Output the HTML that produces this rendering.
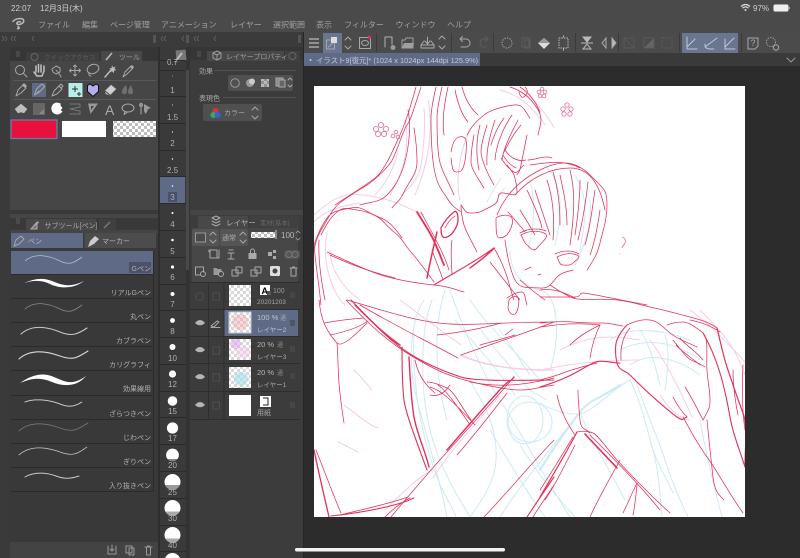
<!DOCTYPE html>
<html><head><meta charset="utf-8"><style>
html,body{margin:0;padding:0;background:#2c2c2c;overflow:hidden;width:800px;height:558px}
svg{display:block}
#root{filter:blur(.35px)}
text{font-family:"Liberation Sans","Noto Sans CJK JP",sans-serif;fill:#b4b4b4;font-size:7px}
.m{font-size:8px;fill:#a0a0a0}
.l{font-size:7px;fill:#b0b0b0;text-anchor:end}
.n{font-size:8px;fill:#b0b0b0;text-anchor:middle}
.i{fill:none;stroke:#a8a8a8;stroke-width:1;stroke-linejoin:round;stroke-linecap:round}
.r path{fill:none;stroke:#e2305a;stroke-width:.75;stroke-linejoin:round;stroke-linecap:round}
.p path{fill:none;stroke:#f5cde6;stroke-width:1;stroke-linejoin:round;stroke-linecap:round}
.b path,.b ellipse{fill:none;stroke:#cdeaf3;stroke-width:1;stroke-linejoin:round;stroke-linecap:round}
.w{fill:none;stroke:#c8c8c8;stroke-width:.8;stroke-linecap:round}
</style></head><body>
<svg id="root" width="800" height="558" viewBox="0 0 800 558" xmlns="http://www.w3.org/2000/svg">
<defs>
<pattern id="ck" width="6" height="6" patternUnits="userSpaceOnUse"><rect width="6" height="6" fill="#fff"/><rect width="3" height="3" fill="#bdbdbd"/><rect x="3" y="3" width="3" height="3" fill="#bdbdbd"/></pattern>
<pattern id="ck2" width="6" height="6" patternUnits="userSpaceOnUse"><rect width="6" height="6" fill="#fff"/><rect width="3" height="3" fill="#d8d8d8"/><rect x="3" y="3" width="3" height="3" fill="#d8d8d8"/></pattern>
<linearGradient id="g20" x1="0" y1="0" x2="0" y2="1"><stop offset=".8" stop-color="#fff"/><stop offset=".8" stop-color="#888"/></linearGradient>
<linearGradient id="g25" x1="0" y1="0" x2="0" y2="1"><stop offset=".68" stop-color="#fff"/><stop offset=".68" stop-color="#999"/></linearGradient>
<linearGradient id="g30" x1="0" y1="0" x2="0" y2="1"><stop offset=".72" stop-color="#fff"/><stop offset=".72" stop-color="#aaa"/></linearGradient>
</defs>
<!-- backgrounds -->
<rect width="800" height="558" fill="#3a3a3a"/>
<rect width="800" height="32" fill="#4a4a4a"/>
<rect y="32" width="304" height="15" fill="#3b3b3b"/>
<rect x="10" y="47" width="148" height="511" fill="#393939"/>
<rect x="10" y="60" width="148" height="150" fill="#464646"/>
<rect x="10" y="47" width="148" height="14" fill="#363636"/>
<rect x="158" y="47" width="2" height="511" fill="#2e2e2e"/>
<rect x="186" y="47" width="4" height="511" fill="#333"/>
<rect x="186" y="70" width="3" height="200" fill="#4a4a4a"/>
<rect x="190" y="47" width="114" height="511" fill="#3c3c3c"/>
<rect x="190" y="47" width="114" height="13" fill="#363636"/>
<rect x="190" y="210" width="114" height="5" fill="#454545"/>
<rect x="304" y="32" width="496" height="526" fill="#2c2c2c"/>
<rect x="304" y="32" width="496" height="21" fill="#4b4b4b"/>
<rect x="304" y="53" width="496" height="13" fill="#3a3a3a"/>
<rect x="304" y="53" width="176" height="13" fill="#5f6a86"/>
<!-- status -->
<text x="11" y="11" style="font-size:8px;fill:#cfcfcf">22:07</text>
<text x="40" y="11" style="font-size:8px;fill:#cfcfcf">12月3日(木)</text>
<path d="M741 6.500Q745.500 2.500 750 6.500M742.500 8.200Q745.500 5.500 748.500 8.200" fill="none" stroke="#ddd" stroke-width="1.200"/><circle cx="745.500" cy="10" r="1" fill="#ddd"/>
<text x="753" y="11" style="font-size:8px;fill:#cfcfcf">97%</text>
<rect x="773.500" y="4.500" width="15" height="7" rx="1.500" fill="#eee" stroke="#aaa" stroke-width=".5"/><rect x="789" y="7" width="1" height="2" fill="#aaa"/>
<!-- menu -->
<path d="M13 21.500C15 18.500 22 17.500 23.500 20C25 23 19 25.500 17 24C16 22.500 19 21 20.500 22M18 26.500C20 28 19 29 17.500 28.500" fill="none" stroke="#bcbcbc" stroke-width="1.500" stroke-linecap="round"/>
<text class="m" x="38" y="27.500">ファイル</text>
<text class="m" x="82" y="27.500">編集</text>
<text class="m" x="110" y="27.500">ページ管理</text>
<text class="m" x="161" y="27.500">アニメーション</text>
<text class="m" x="230" y="27.500">レイヤー</text>
<text class="m" x="273" y="27.500">選択範囲</text>
<text class="m" x="316" y="27.500">表示</text>
<text class="m" x="344" y="27.500">フィルター</text>
<text class="m" x="395.500" y="27.500">ウィンドウ</text>
<text class="m" x="447" y="27.500">ヘルプ</text>
<!-- collapse bars -->
<g fill="none" stroke="#666" stroke-width=".8">
<path d="M2 36l2 2.500-2 2.500M5 36l2 2.500-2 2.500M13 36l-2 2.500 2 2.500M16 36l-2 2.500 2 2.500M34 36l-2 2.500 2 2.500"/>
<path d="M163 36l-2 2.500 2 2.500M166 36l-2 2.500 2 2.500M184 36l-2 2.500 2 2.500"/>
<path d="M196 36l-2 2.500 2 2.500M199 36l-2 2.500 2 2.500M216 36l-2 2.500 2 2.500"/>
</g>
<rect x="153" y="35" width="3" height="8" fill="#555"/><rect x="186" y="35" width="3" height="8" fill="#555"/><rect x="298" y="35" width="3" height="8" fill="#555"/>
<!-- tool panel header -->
<g stroke="#666" stroke-width=".7"><path d="M16 52h4M16 54h4M16 56h4M166 52h4M166 54h4M166 56h4M197 52h4M197 54h4M197 56h4M16 219h4M16 221h4M16 223h4M199 218h4M199 220h4M199 222h4"/></g>
<rect x="26" y="52" width="73" height="9" fill="#3e3e3e"/>
<rect x="101" y="51" width="41" height="10" fill="#484848"/>
<text x="44" y="59.500" style="font-size:6.500px;fill:#5f5f5f">クイックアクセス</text>
<circle cx="34.500" cy="57" r="3.500" fill="none" stroke="#666"/>
<path d="M106 60l6-7" stroke="#bbb" stroke-width="1.500"/>
<text x="119" y="59.500" style="font-size:7px;fill:#9a9a9a">ツール</text>
<!-- tool rows dividers -->
<path d="M13 80.500H156M13 99.500H156" stroke="#606060" stroke-width=".7"/>
<!-- row1 -->
<circle cx="20" cy="70" r="4.500" class="i"/><path d="M23.500 73.500l3.500 3.500" class="i"/>
<path d="M34 72l3 4h5l2-5v-5M38.500 72v-7.500M41 72v-7M36 72v-6" class="i" style="stroke:#c0c0c0;stroke-width:1.500"/>
<path d="M52 69l4-3 4 2v4l-4 2-3-2zM56 70l4 5 1 2" class="i"/>
<path d="M75 65v11M69.500 70.500h11M73.500 66.500l1.500-1.500 1.500 1.500M73.500 74.500l1.500 1.500 1.500-1.500M71 69l-1.500 1.500 1.500 1.500M79 69l1.500 1.500-1.500 1.500" class="i"/>
<ellipse cx="93" cy="69" rx="6" ry="4.500" class="i" transform="rotate(-20 93 69)"/><path d="M90 73c-2 1-1 3 1 3" class="i"/>
<path d="M105 77l6-7" class="i" style="stroke-width:1.500;stroke:#bbb"/><path d="M112 65l1 2.500 2.500-1-1 2.500 2 1-2.500.8 0 2.500-2-2-2 1 1-2.500-2-1.500 2.500 0z" fill="#bbb"/>
<path d="M123 77l2-5 6-6 2 2-6 6z" class="i"/><path d="M130 67l2-2 2 2-2 2z" fill="#aaa"/>
<!-- row2 -->
<rect x="32" y="83" width="14" height="14" fill="#5f6a86"/>
<path d="M16 96l2-6 5-5 3 3-5 5z" class="i"/><path d="M22 85l2-2 3 3-2 2z" fill="#aaa"/>
<path d="M34.500 95l2-6 5.500-5 2.500 2.500-5 5.500zM36 94l3-3" class="i"/>
<path d="M52 96l2-5 5-5 3 3-5 5zM59 86l2-2 2 2-2 2z" class="i"/>
<rect x="68.500" y="83" width="14" height="14" fill="#b4efe8"/>
<path d="M72 89h6M75 86v6M79 92v4M77 94h4" stroke="#333" stroke-width="1" fill="none"/>
<path d="M93 96.500l-5.500-5v-6l2.500-1.500 3 2 3-2 2.500 1.500v6z" fill="#b3aef2" stroke="#111" stroke-width="1"/>
<path d="M105 91l6-6 5 4-6 6-4-1z" fill="#cfcfcf" stroke="#aaa" stroke-width=".6"/><path d="M105 91l5 4" stroke="#444"/>
<path d="M126 85c-3 3-4 5-4 7 0 3 4 3 5 0 0-2 0-4-1-7zM131 85c-2 3-3 5-3 7 0 3 5 3 5 0 0-2-1-4-2-7z" fill="#707070"/>
<!-- row3 -->
<path d="M15 109l6-5 6 5-3 4-3-1-3 1zM15 109h12" fill="#bdbdbd" stroke="#bdbdbd" stroke-width=".5"/>
<rect x="33.500" y="103.500" width="11" height="11" fill="#8a8a8a" stroke="#666"/>
<path d="M33.500 103.500h11v5l-6 6h-5z" fill="#666"/>
<path d="M57 102.500a6 6 0 1 0 5.500 9l-1.800-1.200 1.800-2.300-2-2.500.3-2z" fill="#fff"/>
<path d="M70 104h10v3l-10 2 10 2v3H70" class="i" style="stroke:#777"/>
<path d="M88 103.500h10l-7.500 10.500zM91 106h3l-3 4z" fill="#999" fill-rule="evenodd"/>
<text x="105" y="115" style="font-size:14px;fill:#aaa">A</text>
<ellipse cx="128" cy="108" rx="6" ry="4" class="i"/><path d="M125 111.500l-1 3 3-2" class="i"/>
<path d="M141 103v11M141 103.500a1.500 1.500 0 1 0 .1 0" class="i"/>
<path d="M144 104l7 4-3 1-1 3-1.500 2-1.500-3z" fill="#999"/>
<!-- colour swatches -->
<rect x="11" y="120" width="46" height="18.500" fill="#e8103c" stroke="#6a7ba0" stroke-width="1.300"/>
<rect x="61.500" y="120.500" width="45" height="17" fill="#fff" stroke="#333" stroke-width=".8"/>
<rect x="113" y="121" width="43" height="16" fill="url(#ck)"/>
<!-- brush size column -->
<rect x="160" y="47" width="26" height="511" fill="#3a3a3a"/>
<rect x="176" y="50" width="10" height="11" fill="#777" transform="rotate(-5 181 55)"/>
<path d="M175 62l7-9" stroke="#bbb" stroke-width="2"/>
<rect x="160" y="177" width="25" height="26" fill="#5f6a86"/>
<rect x="168" y="192" width="9" height="10" fill="#4a5169"/>
<g stroke="#2a2a2a" stroke-width="1" fill="none">
<path d="M160 60.500h26M160 70.500h26M160 96.500h26M160 123.500h26M160 150.500h26M160 176.500h26M160 203.500h26M160 230.500h26M160 257.500h26M160 284.500h26M160 310.500h26M160 337.500h26M160 364.500h26M160 391.500h26M160 417.500h26M160 444.500h26M160 471.500h26M160 498.500h26M160 525.500h26M160 551.500h26"/>
</g>
<g fill="#fff">
<circle cx="172.500" cy="76" r=".4"/><circle cx="172.500" cy="105" r=".5"/><circle cx="172.500" cy="132" r=".6"/><circle cx="172.500" cy="159" r=".7"/><circle cx="172.500" cy="186" r=".8"/>
<circle cx="172.500" cy="213" r="1"/><circle cx="172.500" cy="240" r="1.300"/><circle cx="172.500" cy="267" r="1.600"/><circle cx="172.500" cy="294" r="2"/><circle cx="172.500" cy="320.500" r="2.400"/>
<circle cx="172.500" cy="347" r="3"/><circle cx="172.500" cy="374" r="3.600"/><circle cx="172.500" cy="401" r="4.800"/><circle cx="172.500" cy="428" r="5.600"/>
<circle cx="172.500" cy="455" r="6.400" fill="url(#g20)"/><circle cx="172.500" cy="482" r="8" fill="url(#g25)"/><circle cx="172.500" cy="508" r="8" fill="url(#g30)"/><circle cx="172.500" cy="535" r="8" fill="url(#g30)"/><circle cx="172.500" cy="561" r="8"/>
</g>
<text class="n" x="172.500" y="65">0.7</text>
<text class="n" x="172.500" y="93">1</text><text class="n" x="172.500" y="120">1.5</text><text class="n" x="172.500" y="146">2</text><text class="n" x="172.500" y="173">2.5</text><text class="n" x="172.500" y="200">3</text>
<text class="n" x="172.500" y="227">4</text><text class="n" x="172.500" y="254">5</text><text class="n" x="172.500" y="280">6</text><text class="n" x="172.500" y="307">7</text><text class="n" x="172.500" y="334">8</text><text class="n" x="172.500" y="361">10</text><text class="n" x="172.500" y="387">12</text><text class="n" x="172.500" y="414">15</text><text class="n" x="172.500" y="441">17</text><text class="n" x="172.500" y="468">20</text><text class="n" x="172.500" y="495">25</text><text class="n" x="172.500" y="521">30</text><text class="n" x="172.500" y="548">40</text>
<!-- layer property -->
<rect x="207" y="51" width="77" height="10" fill="#484848"/><rect x="285" y="51" width="15" height="10" fill="#404040"/>
<path d="M213 53l4-2 4 2v5l-4 2-4-2zM213 53l4 2 4-2M217 55v5" class="i" style="stroke:#999"/>
<text x="226" y="59" style="font-size:7px;fill:#a0a0a0">レイヤープロパティ</text>
<circle cx="292.500" cy="56" r="3.500" fill="none" stroke="#666"/>
<text x="199" y="73.500" style="font-size:7px;fill:#a8a8a8">効果</text>
<path d="M214 70.500H296M199 97.500H296" stroke="#5a5a5a" stroke-width=".8"/>
<rect x="197" y="94" width="26" height="8" fill="#3c3c3c"/>
<text x="199" y="100.500" style="font-size:7px;fill:#a8a8a8">表現色</text>
<rect x="228" y="75" width="65" height="16" rx="2" fill="#505050"/>
<circle cx="235" cy="83" r="4.300" class="i" style="stroke:#999"/>
<circle cx="250" cy="83" r="4" fill="#999"/><circle cx="252" cy="81.500" r="3" fill="#ccc"/>
<rect x="261" y="79" width="8" height="8" fill="url(#ck)" opacity=".6"/>
<rect x="276" y="78" width="7" height="8" fill="#888" stroke="#aaa"/><rect x="279" y="80" width="6" height="7" fill="#666" stroke="#aaa"/>
<path d="M288 80l2-2 2 2M288 85l2 2 2-2" class="i"/>
<rect x="203" y="104" width="59" height="17" rx="2" fill="#505050"/>
<circle cx="215.500" cy="111" r="3" fill="#d33"/><circle cx="213.500" cy="115" r="3" fill="#3a6"/><circle cx="217.500" cy="115" r="3" fill="#36c"/>
<text x="224" y="115" style="font-size:7px;fill:#aaa">カラー</text>
<path d="M252 110l3-3 3 3M252 116l3 3 3-3" class="i"/>
<!-- subtool panel -->
<rect x="10" y="214" width="148" height="4" fill="#464646"/>
<rect x="26" y="219" width="70" height="11" fill="#484848"/><rect x="99" y="219" width="17" height="11" fill="#404040"/>
<path d="M31 229l6-7v7zM34 226l5-4" stroke="#aaa" fill="#777"/>
<text x="44.500" y="228" style="font-size:7px;fill:#a8a8a8">サブツール[ペン]</text>
<path d="M104 228l6-6" stroke="#777" stroke-width="1.500"/>
<rect x="10" y="230" width="148" height="3" fill="#444"/>
<rect x="11" y="233" width="72" height="15" fill="#5f6a86"/>
<rect x="84.500" y="233" width="71.500" height="15" fill="#4c4c4c"/>
<path d="M14 246l2-6 5-4 3 3-5 5z" class="i"/>
<text x="28" y="243.500" style="font-size:7px;fill:#b8b8b8">ペン</text>
<path d="M88 247l2-6 5-5 4 3-5 5z" fill="#ccc"/>
<text x="102" y="243.500" style="font-size:7px;fill:#b8b8b8">マーカー</text>
<!-- subtool list -->
<rect x="11" y="251" width="142" height="23" fill="#5f6a86"/>
<rect x="129" y="262" width="22" height="11" fill="#4b5268"/>
<g stroke="#2b2b2b" stroke-width="1"><path d="M11 274.500h142M11 298.500h142M11 322.500h142M11 346.500h142M11 370.500h142M11 395.500h142M11 419.500h142M11 443.500h142M11 467.500h142M11 491.500h142M153.500 251v241"/></g>
<path d="M25 261C35 252 50 256 60 261S75 262 82 257" fill="none" stroke="#b4bdd4" stroke-width=".8"/>
<path d="M24 283C34 279 42 277 52 281S70 288 84 281C72 290 58 288 50 284S34 280 24 283Z" fill="#fff"/>
<path d="M25 309C35 300 50 304 60 309S75 310 82 305" class="w" style="stroke:#8a8a8a"/>
<path d="M21 334C32 324 48 327 60 332S78 334 87 328" class="w" style="stroke-width:1.100"/>
<path d="M19 359C30 349 46 351 60 356S78 357 88 351" class="w" style="stroke-width:1.100;stroke:#d8d8d8"/>
<path d="M20 383C32 375 42 372 54 377S72 386 86 376C76 388 62 386 52 382S34 377 20 383Z" fill="#fff"/>
<path d="M25 402C35 398 50 400 60 404S75 406 82 402" class="w" style="stroke-dasharray:2 .7;stroke-width:1"/>
<path d="M19 431C30 421 46 423 60 428S78 429 88 423" class="w" style="stroke:#777"/>
<path d="M19 455C30 445 46 447 60 452S78 453 87 447" class="w" style="stroke-dasharray:2 .6"/>
<path d="M25 477C35 471 48 473 56 476S70 479 79 476" class="w" style="stroke-width:1"/>
<text class="l" x="151" y="271">Gペン</text>
<text class="l" x="151" y="295">リアルGペン</text>
<text class="l" x="151" y="319">丸ペン</text>
<text class="l" x="151" y="343">カブラペン</text>
<text class="l" x="151" y="367">カリグラフィ</text>
<text class="l" x="151" y="391">効果線用</text>
<text class="l" x="151" y="416">ざらつきペン</text>
<text class="l" x="151" y="440">じわペン</text>
<text class="l" x="151" y="464">ぎりペン</text>
<text class="l" x="151" y="488">入り抜きペン</text>
<rect x="10" y="542" width="148" height="16" fill="#434343"/>
<path d="M108 546v8h8v-8M112 545v6M110 549l2 2 2-2" class="i" style="stroke:#999"/>
<path d="M126 546h6v7h-6zM129 548h5v7h-5z" class="i" style="stroke:#999"/>
<path d="M145 547h7M146.500 547v8h4v-8M147.500 547v-1h2v1" class="i" style="stroke:#999"/>
<!-- layer panel -->
<rect x="198" y="216" width="50" height="12" fill="#484848"/><rect x="250" y="216" width="49" height="12" fill="#404040"/>
<path d="M212 218l4-2 4 2-4 2zM212 221l4 2 4-2M212 224l4 2 4-2" class="i" style="stroke:#aaa"/>
<text x="226" y="225.500" style="font-size:7.500px;fill:#b0b0b0">レイヤー</text>
<text x="260" y="225" style="font-size:6.500px;fill:#666">素材[基本]</text>
<rect x="192" y="228" width="106" height="54" fill="#474747"/>
<rect x="192" y="229" width="27" height="17" rx="2" fill="#555"/>
<rect x="195.500" y="233" width="10" height="9" fill="#4a4a4a" stroke="#999"/>
<path d="M210 235l3-3 3 3M210 240l3 3 3-3" class="i"/>
<rect x="220" y="229" width="28" height="17" rx="2" fill="#555"/>
<text x="222" y="240" style="font-size:7px;fill:#aaa">通常</text>
<path d="M240 235l3-3 3 3M240 240l3 3 3-3" class="i"/>
<rect x="251" y="232" width="24" height="6" fill="url(#ck)"/><rect x="275" y="230" width="2" height="9" fill="#888"/>
<text x="281" y="238" style="font-size:8px;fill:#b8b8b8">100</text>
<path d="M296 233l2-2 2 2M296 238l2 2 2-2" class="i" style="stroke-width:.8"/>
<path d="M210 250h7v8h-7zM209 252v-2M217 258h2v-8" class="i"/>
<path d="M229 250h4M228 253h6M231 253v6M228 259h6" class="i"/>
<path d="M250.500 253v-2a2 2 0 0 1 4 0v2" class="i"/><rect x="248.500" y="253" width="8" height="6" fill="#aaa"/>
<path d="M268 252h4v4h-4zM273 250h3v3h-3zM273 256h3v3h-3z" fill="#aaa"/>
<rect x="284" y="250" width="16" height="9" rx="3" fill="#555"/><circle cx="289" cy="254.500" r="3" fill="none" stroke="#777"/><circle cx="295" cy="254.500" r="3" fill="none" stroke="#777"/>
<path d="M195.500 267h8v5M195.500 267v8h5" class="i"/><circle cx="203" cy="274" r="2.500" class="i"/>
<path d="M213.500 268v7h8v-6h-4l-1-1z" fill="#999"/><circle cx="221" cy="274" r="2.500" fill="#474747" stroke="#aaa"/>
<path d="M232 270h6v6h-6zM236 267h6v6h-6z" class="i"/>
<path d="M251 270h6v6h-6zM255 267h6v6h-6z" class="i"/>
<rect x="270" y="266" width="10" height="10" rx="1.500" fill="#ddd"/><circle cx="275" cy="271" r="2.500" fill="#444"/>
<path d="M290 268h7M291 268v8h5v-8M292.500 268v-1h2v1" class="i"/>
<!-- layers -->
<rect x="224" y="310" width="74" height="26" fill="#5f6a86"/>
<g stroke="#2e2e2e" stroke-width="1"><path d="M190 282.500H300M190 309.500H300M190 336.500H300M190 363.500H300M190 391.500H300M190 419.500H300M208.500 283V419M224 283V419"/></g>
<rect x="196" y="293" width="7" height="7" rx="2" fill="none" stroke="#4e4e4e"/>
<rect x="213" y="293" width="6.500" height="7" fill="none" stroke="#4e4e4e"/>
<g fill="#b4b4b4"><path d="M195 323c3-4 7-4 10 0-3 3-7 3-10 0zM195 350c3-4 7-4 10 0-3 3-7 3-10 0zM195 377c3-4 7-4 10 0-3 3-7 3-10 0zM195 405c3-4 7-4 10 0-3 3-7 3-10 0z"/></g>
<path d="M211 326l6-5 2 1-5 5zM211 327.500h9" class="i"/>
<rect x="213" y="347" width="6.500" height="7" fill="none" stroke="#4e4e4e"/><rect x="213" y="374" width="6.500" height="7" fill="none" stroke="#4e4e4e"/><rect x="213" y="402" width="6.500" height="7" fill="none" stroke="#4e4e4e"/>
<!-- thumbs -->
<rect x="229" y="285" width="22" height="21" fill="url(#ck2)"/>
<rect x="229" y="312" width="22" height="21" fill="url(#ck2)" stroke="#c8c8c8" stroke-width="1"/><ellipse cx="240" cy="322" rx="8" ry="8" fill="#f2a8b4" opacity=".45"/>
<rect x="229" y="339" width="22" height="21" fill="url(#ck2)"/><ellipse cx="236" cy="344" rx="5" ry="5" fill="#dda6ee" opacity=".6"/><ellipse cx="243" cy="352" rx="7" ry="6" fill="#f4c9ec" opacity=".5"/>
<rect x="229" y="367" width="22" height="21" fill="url(#ck2)"/><ellipse cx="241" cy="379" rx="7" ry="7" fill="#a8e0ea" opacity=".65"/>
<rect x="229" y="395" width="22" height="21" fill="#fff"/>
<!-- layer text -->
<rect x="260" y="285" width="10" height="10" fill="#fff"/><text x="261.500" y="294" style="font-size:9px;fill:#000;font-weight:bold">A</text>
<rect x="267" y="291" width="4" height="4" fill="#555"/>
<text x="273" y="293" style="font-size:7px;fill:#999">100</text>
<text x="257" y="304" style="font-size:6.500px;fill:#a8a8a8">20201203</text>
<text x="257" y="320" style="font-size:7.500px;fill:#c0c4d0">100 %</text><text x="280" y="320" style="font-size:6px;fill:#a0a6b8">通</text>
<text x="257" y="332" style="font-size:6.500px;fill:#bec3d2">レイヤー2</text>
<text x="257" y="347" style="font-size:7.500px;fill:#b4b4b4">20 %</text><text x="277" y="347" style="font-size:6px;fill:#888">通</text>
<text x="257" y="359" style="font-size:6.500px;fill:#a8a8a8">レイヤー3</text>
<text x="257" y="375" style="font-size:7.500px;fill:#b4b4b4">20 %</text><text x="277" y="375" style="font-size:6px;fill:#888">通</text>
<text x="257" y="387" style="font-size:6.500px;fill:#a8a8a8">レイヤー1</text>
<rect x="260" y="396" width="11" height="11" fill="#fff"/><path d="M263 398h5v7h-5" fill="none" stroke="#222" stroke-width="1"/>
<text x="257" y="415" style="font-size:7px;fill:#a8a8a8">用紙</text>
<g stroke="#555" stroke-width=".8"><path d="M290 293h5M290 295h5M290 297h5M290 347h5M290 349h5M290 351h5M290 374h5M290 376h5M290 378h5M290 403h5M290 405h5M290 407h5"/></g>
<path d="M290 321h5M290 323h5M290 325h5" stroke="#333" stroke-width=".8"/>
<!-- toolbar -->
<g stroke="#3a3a3a" stroke-width="1"><path d="M376.500 33v19M451.500 33v19M493.500 33v19M575.500 33v19M618.500 33v19M679.500 33v19M741.500 33v19"/></g>
<rect x="323" y="33" width="19" height="20" fill="#6a7590"/>
<rect x="682" y="33" width="56" height="20" fill="#6a7590"/>
<path d="M309 39h10M309 43h10M309 47h10" stroke="#bbb" stroke-width="1.300"/>
<path d="M326.500 40h8v9h-8zM328.500 47l5-5" class="i"/><rect x="331" y="37" width="6" height="6" fill="#ddd"/>
<path d="M345 40l3-3 3 3M345 46l3 3 3-3" class="i"/>
<rect x="359.500" y="37.500" width="11" height="11" class="i"/><ellipse cx="365" cy="43" rx="3.500" ry="2.500" class="i"/><circle cx="369.500" cy="37.500" r="1.700" fill="#d9365a"/>
<path d="M385 47v-10h7v7" class="i" style="stroke:#b0b0b0"/><circle cx="393" cy="47.500" r="2.500" fill="#999"/>
<path d="M402 48v-8h3l1-2h7v10z" fill="none" stroke="#a0a0a0"/><path d="M402 48l2-5h10l-2 5z" fill="#a0a0a0"/>
<path d="M421 48h13v-3h-13zM427.500 37v7M425 41l2.500 3 2.500-3M424 41l-3 4M431 41l3 4" class="i"/>
<path d="M439 39l3-3 3 3M439 46l3 3 3-3" class="i"/>
<path d="M460 39h6a4 4 0 0 1 0 8h-5M460 39l2.500-2.500M460 39l2.500 2.500" class="i"/>
<path d="M488 39h-4a4 4 0 0 0 0 8h2M488 39l-2.500-2.500M488 39l-2.500 2.500" class="i" style="stroke:#5e5e5e"/>
<circle cx="507" cy="43" r="5" fill="none" stroke="#aaa" stroke-dasharray="1.300 1.300"/>
<rect x="522" y="38" width="7" height="9" fill="none" stroke="#5c5c5c"/><rect x="525" y="40" width="5" height="8" fill="none" stroke="#5c5c5c"/>
<path d="M538 43l6-5 6 5-6 6z" fill="#ddd"/><path d="M538 43l6-5 6 5z" fill="#999"/>
<rect x="559" y="38" width="9" height="10" fill="none" stroke="#bbb" stroke-dasharray="1.500 1"/><path d="M563.500 35.500v2M563.500 48.500v2" stroke="#bbb"/>
<path d="M583 37h8l-4 5zM583 49h8l-4-5zM581 43h12" stroke="#bbb" fill="#555"/><path d="M583 37h8l-4 5z" fill="#bbb"/>
<path d="M606 38v10l-4-5z" fill="#555" stroke="#aaa"/><path d="M612 38v10l4-5z" fill="#bbb" stroke="#aaa"/>
<rect x="624" y="38" width="10" height="10" fill="none" stroke="#5a5a5a"/><path d="M624 38l10 10" stroke="#5a5a5a"/>
<path d="M644 48l10-10v10z" fill="#666"/><rect x="644" y="38" width="10" height="10" fill="none" stroke="#5a5a5a"/>
<rect x="662" y="38" width="10" height="10" fill="none" stroke="#5a5a5a" stroke-dasharray="2 1"/>
<path d="M687 37v12h10M687 47l8-8" class="i" style="stroke:#c0c8d8"/>
<path d="M705 47l12-9M705 44c0 4 2 5 5 5h4" class="i" style="stroke:#c0c8d8"/>
<path d="M725 49h10M725 39v10M725 47l9-9" class="i" style="stroke:#c0c8d8"/>
<path d="M748 38h10v8l-3 3h-7z" class="i"/><text x="750.500" y="46" style="font-size:9px;fill:#aaa">?</text>
<circle cx="771" cy="42" r="4.500" fill="none" stroke="#999" stroke-dasharray="1.500 1"/><circle cx="776" cy="47.500" r="2.700" class="i"/>
<!-- tab -->
<circle cx="310.500" cy="60" r="1" fill="#c6cbdb"/>
<text x="316" y="63" style="font-size:7.400px;fill:#c3c8d6">イラスト9[復元]* (1024 x 1024px 144dpi 125.9%)</text>
<path d="M787 58l4 4 4-4" class="i" style="stroke:#999"/>
<rect x="303" y="32" width="1" height="526" fill="#262626"/>
<!-- canvas -->
<rect x="314" y="86" width="431" height="431" fill="#fff"/>
<svg x="314" y="86" width="431" height="431" viewBox="314 86 431 431">
<g class="b">
<path d="M424 300C408 325 409 370 417 400S440 480 447 517"/>
<path d="M414 333C412 370 418 420 431 460S450 500 456 517"/>
<path d="M432 300C420 330 420 390 430 430S460 500 470 517"/>
<path d="M445 290C432 330 436 380 447 420"/>
<path d="M481 330C495 350 510 365 521 380S540 395 547 400"/>
<path d="M470 300C490 330 515 350 540 380"/>
<path d="M455 320C475 345 495 365 515 395M500 330C510 345 520 360 530 375"/>
<ellipse cx="530" cy="422" rx="22" ry="20"/><ellipse cx="525" cy="420" rx="18" ry="24"/>
<path d="M540 403C555 412 572 416 583 413S618 385 630 380C640 400 645 420 650 440S665 475 673 493"/>
<path d="M635 378C645 410 655 430 665 460S680 500 688 517"/>
<path d="M540 470C552 450 570 425 580 412S598 400 620 385" style="stroke-width:2"/>
<path d="M500 517C520 485 550 450 580 412"/>
<path d="M610 340C630 325 665 330 690 340M620 350C650 335 680 345 700 360M630 365C650 350 680 360 700 375M640 330C650 345 655 365 660 385M665 335C670 350 668 370 665 390"/>
<path d="M487 202C492 192 497 184 501 178M495 205C498 198 502 190 505 188"/>
<path d="M545 165C560 180 565 205 555 245M575 175C590 200 585 220 580 250M530 180C535 200 535 225 528 250M590 200C592 225 585 245 575 265"/>
<path d="M510 250C510 270 520 285 540 290S560 340 550 370"/>
<path d="M450 290C460 320 480 370 500 400S540 470 570 517"/>
<path d="M580 412C590 440 610 470 625 500"/>
<path d="M470 517C490 490 500 470 495 440S480 400 470 380"/>
<path d="M700 420C705 450 715 490 722 517M650 440C660 470 660 500 662 517"/>
<path d="M520 445C535 470 555 495 575 517M490 430C505 455 525 490 545 517"/>
</g>
<g class="p">
<path d="M314 215C325 205 335 197 347 195S380 197 394 202S415 212 424 215"/>
<path d="M314 222C325 210 345 205 360 203"/>
<path d="M424 108C426 130 423 152 421 165S410 188 401 195"/>
<path d="M428 100C434 130 428 165 415 195"/>
<path d="M405 120C410 145 405 170 390 195M398 150C396 165 385 185 375 195"/>
<path d="M511 87C520 92 530 95 538 105S550 120 554 128"/>
<path d="M500 90C520 95 535 110 545 125"/>
<path d="M540 370C560 366 575 364 583 363S620 360 640 360"/>
<path d="M460 355C490 368 520 370 554 370" style="stroke-width:1.600"/>
<path d="M690 310C705 320 725 340 745 362M700 310C720 330 735 345 745 375"/>
<path d="M327 232C322 260 330 290 345 305M330 250C330 270 345 290 360 300"/>
<path d="M344 405C358 415 368 425 378 428M338 442C345 445 352 449 358 452M354 370C362 378 368 385 372 390"/>
<path d="M400 300C420 315 440 330 461 345"/>
<path d="M433 478C450 450 480 420 500 395"/>
<path d="M385 510C400 495 420 475 433 470"/>
<path d="M660 395C670 410 680 420 690 420"/>
<path d="M470 130C460 150 455 180 460 200"/>
<path d="M560 350C590 335 610 335 640 340"/>
<path d="M650 340C665 360 680 390 692 417"/>
</g>
<g class="r">
<path d="M421 87C415 105 411 120 407 125S396 155 391 162S375 180 367 185S350 195 341 202S330 215 324 225S316 240 314 250"/>
<path d="M416 87C411 105 406 122 400 135S385 170 375 178S345 198 335 205"/>
<path d="M436 87C433 100 431 110 431 118S431 150 434 168S442 190 447 198S455 208 461 212"/>
<path d="M442 87C439 100 437 110 437 118S437 145 439 158S448 180 454 195"/>
<path d="M448 87C444 105 442 120 444 135"/>
<path d="M455 90C458 105 462 115 468 122M462 87C465 98 470 108 478 115"/>
<path d="M414 128C416 140 417 150 417 162S410 180 404 192S398 200 392 208"/>
<path d="M408 110C412 130 408 165 395 185S375 200 360 205"/>
<path d="M314 245C318 233 322 225 327 218S340 210 351 208S365 211 374 215S385 225 394 232S403 243 411 252S425 270 434 282"/>
<path d="M321 235C326 225 330 218 337 212S348 209 357 210S372 214 381 218S395 228 402 238"/>
<path d="M451 152C452 146 454 140 457 138S465 136 466 140S466 158 464 165S460 172 456 172S452 165 451 158"/>
<path d="M467 135C472 125 478 120 484 115S504 106 514 105S525 112 530 118"/>
<path d="M507 165C510 169 513 172 514 175S517 186 517 192S505 192 501 193S499 199 497 202S490 207 484 210S477 213 471 213S465 210 461 205"/>
<path d="M501 158C505 164 510 170 514 172S520 168 524 165"/>
<path d="M503 155C507 162 512 166 516 168M505 150C510 158 518 162 526 160"/>
<path d="M474 135C472 145 471 155 471 162S478 178 484 188"/>
<path d="M487 125C484 135 481 145 481 152S488 175 494 185"/>
<path d="M504 118C498 126 494 135 491 145"/>
<path d="M521 125C514 133 509 142 504 152"/>
<path d="M527 135C525 145 523 155 521 165S518 172 517 175"/>
<path d="M495 120C490 135 486 150 487 165"/>
<path d="M512 115C503 128 496 145 495 160M480 125C476 140 476 155 479 170M518 120C510 135 503 150 502 160"/>
<path d="M510 87C520 90 530 97 537 108S540 125 538 135"/>
<path d="M520 87C528 92 535 100 540 112"/>
<path d="M525 87c3 3 3 6 0 9s-5 0-6-4"/>
<path d="M530 165C550 162 565 160 580 168M528 160C535 160 545 155 552 158"/>
<path d="M497 215C505 195 520 180 540 170S575 160 590 175S607 190 607 205S603 230 600 243S592 262 587 270"/>
<path d="M515 195C530 178 550 168 570 168S600 185 605 210"/>
<path d="M496 218C500 215 508 214 511 217S512 227 509 232S502 238 499 238S496 228 496 218"/>
<path d="M505 240C507 255 510 270 515 280S530 287 540 288S552 282 557 277S567 272 573 270"/>
<path d="M521 235C528 231 537 230 544 233S541 243 537 248S530 247 527 245S523 238 521 235"/>
<path d="M520 233C528 228 540 228 546 231"/>
<path d="M557 257C565 253 572 253 577 255S576 260 573 263S567 265 563 265S559 260 557 257"/>
<path d="M555 254C563 250 572 250 579 254"/>
<path d="M520 210C525 218 530 226 535 235M535 190C540 205 545 220 550 235M547 180C552 195 555 215 553 240M560 175C563 190 567 205 567 225M580 180C580 195 578 215 575 235M595 190C592 210 590 228 585 245M600 210C598 225 594 245 590 255M570 170C575 190 575 210 570 245"/>
<path d="M527 190C533 203 540 218 542 228M553 172C558 188 560 205 560 225M588 182C586 200 583 220 578 240M508 212C515 220 522 228 525 232"/>
<path d="M525 270l6-3M538 275l3-1"/>
<path d="M417 212C422 220 427 228 431 235S440 255 444 265" style="stroke-width:1.800"/>
<path d="M421 212C426 222 432 232 437 242S446 260 449 270"/>
<path d="M427 278C430 262 434 245 437 232" style="stroke-width:1.500"/>
<path d="M441 228C445 220 450 215 454 212S459 220 457 225S452 235 447 237S441 235 441 228" style="stroke-width:1.300"/>
<path d="M445 228C448 222 452 218 455 216"/>
<path d="M432 250C436 262 440 270 443 280"/>
<path d="M452 240C450 255 452 268 452 275"/>
<path d="M434 285C450 275 475 262 494 248" style="stroke-width:1.100"/>
<path d="M470 268C478 262 488 255 494 248" style="stroke-width:1.400"/>
<path d="M477 252C472 242 466 232 464 225S461 212 461 205"/>
<path d="M327 252C345 260 365 270 381 275S415 283 434 285S455 290 464 292"/>
<path d="M330 255C345 262 370 272 395 278"/>
<path d="M314 245C315 255 316 265 317 272S320 295 321 305"/>
<path d="M319 240C318 260 322 285 325 300"/>
<path d="M490 262C500 275 512 290 520 300"/>
<path d="M494 248C500 258 505 270 508 280S512 295 514 300"/>
<path d="M520 280C528 287 538 295 545 300"/>
<path d="M507 298C512 295 516 292 521 292S525 300 527 305"/>
<path d="M509 300c2-3 7-5 9-2s0 14-3 16-7-2-7-7z"/>
<path d="M550 285C558 290 565 295 573 298S600 298 617 300S640 305 650 307S675 313 690 317S710 323 717 328"/>
<path d="M540 297C552 297 563 297 573 297S578 293 583 293S620 300 647 305"/>
<path d="M540 290C555 288 565 293 575 298"/>
<path d="M540 323C552 322 563 321 573 322S595 323 603 323S615 325 623 326"/>
<path d="M540 327C555 325 575 322 600 325"/>
<path d="M627 325C622 330 619 335 617 340S615 355 617 363S625 370 630 375S645 390 653 397S670 412 677 417S683 418 687 417" style="stroke-width:1.100"/>
<path d="M630 328C624 335 620 345 621 360"/>
<path d="M627 325C635 321 642 319 650 320S663 327 670 333S687 342 697 347"/>
<path d="M673 340C678 346 682 352 687 357S698 362 705 367"/>
<path d="M680 338C685 345 695 350 703 360M676 345C682 352 692 358 700 365"/>
<path d="M667 325C672 323 677 322 683 322S697 328 703 333S706 355 707 370S710 390 710 400S707 412 703 420"/>
<path d="M673 397C677 405 682 412 687 417M685 387C692 398 698 410 703 420"/>
<path d="M717 328C720 340 723 355 727 367S738 400 743 413S745 445 745 467" style="stroke-width:1.200"/>
<path d="M703 333C710 345 716 360 720 373S727 400 730 417S738 445 745 467" style="stroke-width:1.100"/>
<path d="M690 320C700 322 710 325 720 332"/>
<path d="M683 417C690 430 698 445 707 457S730 495 743 513"/>
<path d="M707 420C709 440 711 460 713 477S720 495 724 500"/>
<path d="M733 370C733 385 735 400 738 415M743 365C742 385 742 410 745 430"/>
<path d="M540 387C550 384 558 381 567 377S585 367 593 363S610 363 620 363" style="stroke-width:1.100"/>
<path d="M540 380C548 378 555 376 563 373S585 366 597 363"/>
<path d="M600 325C595 335 592 345 590 358"/>
<path d="M570 345C580 335 590 330 600 325"/>
<path d="M578 390C578 400 579 410 580 420S585 428 590 433"/>
<path d="M557 395C560 410 568 425 575 435"/>
<path d="M540 497C550 480 565 455 577 432" style="stroke-width:1.200"/>
<path d="M540 490C550 475 562 455 573 437"/>
<path d="M545 500C555 485 565 465 575 445"/>
<path d="M577 432C582 431 588 431 593 433S608 450 617 460S650 495 670 513"/>
<path d="M585 434C595 445 605 455 617 468" style="stroke-width:1.600"/>
<path d="M590 435C610 455 640 485 660 510"/>
<path d="M623 513C628 503 632 493 637 483M633 515C635 505 636 495 637 485"/>
<path d="M590 517C600 495 612 475 620 460"/>
<path d="M351 300C370 320 387 338 404 350S445 372 461 377S525 380 554 380" style="stroke-width:1.100"/>
<path d="M346 300C365 320 385 340 410 355S450 378 490 386S530 388 554 385"/>
<path d="M355 305C370 320 385 335 400 345" style="stroke-width:1.500"/>
<path d="M470 382C500 388 525 385 554 378"/>
<path d="M347 300C375 308 405 318 431 322S480 324 507 323S540 322 554 322"/>
<path d="M360 305C385 320 415 335 458 358"/>
<path d="M437 335C455 333 480 329 501 323"/>
<path d="M461 355C480 348 520 335 554 322"/>
<path d="M319 300C320 310 322 318 324 323S332 338 337 343S355 335 367 323"/>
<path d="M324 323C335 321 350 319 364 318M330 335C345 332 358 328 368 321"/>
<path d="M337 343C338 355 338 370 339 383S342 410 344 423"/>
<path d="M402 347C402 365 402 385 404 400S418 445 427 470" style="stroke-width:1.100"/>
<path d="M409 357C410 375 411 400 414 417S425 450 429 467" style="stroke-width:1.400"/>
<path d="M447 450C460 435 480 412 497 393S508 385 514 377" style="stroke-width:1.400"/>
<path d="M391 517C405 500 418 485 431 470S490 405 514 377"/>
<path d="M457 455C470 440 490 415 507 393"/>
<path d="M427 382C433 382 440 385 447 388S462 408 471 420"/>
<path d="M430 387C440 390 450 398 475 425M438 385C448 392 460 410 470 425"/>
<path d="M415 360C418 375 425 385 435 393M430 395C440 397 445 392 450 385"/>
<path d="M314 450C318 470 324 495 329 517" style="stroke-width:1.300"/>
<path d="M316 450C324 470 332 492 341 513"/>
<path d="M331 516C350 514 375 510 394 505S408 500 414 498" style="stroke-width:1.100"/>
<path d="M340 515C360 510 385 505 408 497M385 517C392 510 400 503 410 498"/>
<path d="M484 517C505 495 530 465 554 440"/>
<path d="M527 517C535 505 545 490 554 477" style="stroke-width:1.100"/>
<path d="M533 517C540 505 548 495 554 485"/>
<path d="M480 345C490 342 500 340 515 335M505 335c3-2 5-4 8-6"/>
</g>
<!-- flowers -->
<g fill="none" stroke="#e87aa0" stroke-width=".9">
<circle cx="381" cy="125" r="2.600"/><circle cx="376" cy="129" r="2.600"/><circle cx="386" cy="129" r="2.600"/><circle cx="378" cy="134" r="2.600"/><circle cx="384" cy="134" r="2.600"/>
<circle cx="396" cy="132" r="1.800"/><circle cx="393" cy="136" r="1.800"/><circle cx="398" cy="137" r="1.800"/>
<circle cx="542" cy="89" r="1.800"/><circle cx="539" cy="92" r="1.800"/><circle cx="545" cy="92" r="1.800"/><circle cx="540" cy="96" r="1.800"/><circle cx="544" cy="96" r="1.800"/>
<circle cx="567" cy="105" r="2.200"/><circle cx="563" cy="109" r="2.200"/><circle cx="571" cy="109" r="2.200"/><circle cx="564" cy="114" r="2.200"/><circle cx="570" cy="114" r="2.200"/>
<path d="M622 237C625 238 626 241 625 243S622 247 622 248" stroke="#e0789a"/><path d="M619 254h.6"/>
</g>
</svg>
<!-- home indicator -->
<rect x="295" y="548" width="210" height="3.500" rx="1.700" fill="#f2f2f2"/>
</svg>
</body></html>
